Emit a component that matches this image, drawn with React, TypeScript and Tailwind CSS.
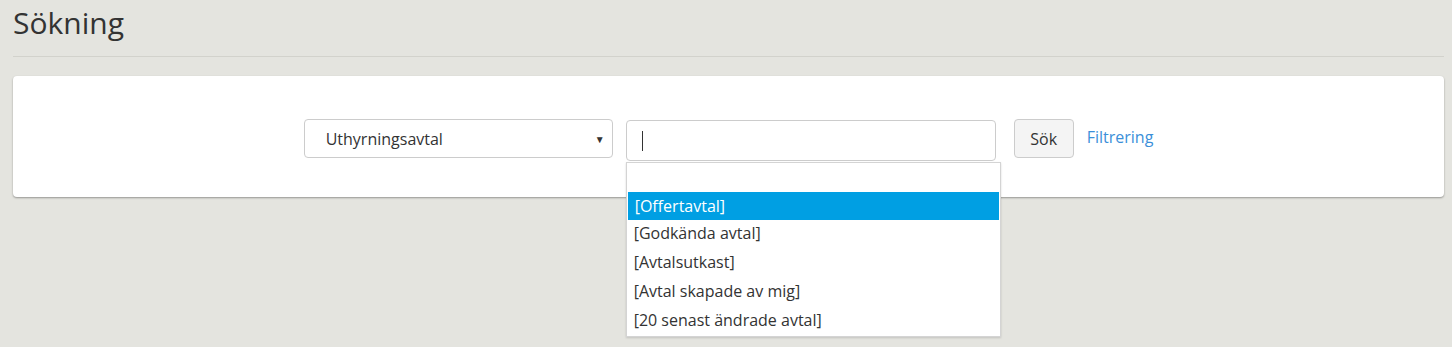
import { useState } from "react";

const options = [
  "[Offertavtal]",
  "[Godkända avtal]",
  "[Avtalsutkast]",
  "[Avtal skapade av mig]",
  "[20 senast ändrade avtal]",
];

export default function App() {
  const [query, setQuery] = useState("");

  return (
    <div className="min-h-[347px] bg-[#e4e4df] pl-[13px] pr-[8px] pt-[3px] font-['Open_Sans','Noto_Sans',sans-serif] text-[#333]">
      <h1 className="text-[30px] leading-[40px] font-normal text-[#333]">Sökning</h1>
      <hr className="mt-[13px] border-t border-[#d2d2cc]" />

      <div className="mt-[19px] h-[121px] rounded-[4px] bg-white shadow-[0_1px_2px_rgba(0,0,0,0.35)] flex justify-center pt-[43px]">
        <div className="flex items-start">
          <div className="relative w-[309px] h-[39px]">
            <select className="appearance-none w-full h-full rounded-[4px] border border-[#ccc] bg-white pl-[21px] text-[16px] text-[#333]">
              <option>Uthyrningsavtal</option>
            </select>
            <span className="pointer-events-none absolute right-[8px] top-[13px] text-[10px] text-[#333]">▼</span>
          </div>

          <div className="relative ml-[13px] mt-px">
            <input
              value={query}
              onChange={(e) => setQuery(e.target.value)}
              className="w-[370px] h-[41px] rounded-[4px] border border-[#ccc] bg-white px-[16px] text-[16px] outline-none"
            />
            <span className="absolute left-[16px] top-[11px] h-[20px] w-px bg-[#333]" />
            <ul className="absolute left-0 top-[42px] w-[375px] border border-[#d4d4d4] bg-white pt-[29px] shadow-[0_1px_2px_rgba(0,0,0,0.15)]">
              {options.map((o, i) => (
                <li
                  key={o}
                  className={
                    i === 0
                      ? "h-[28px] leading-[28px] pl-[7px] mx-px text-[16px] bg-[#009fe3] text-white"
                      : "h-[29px] leading-[27px] pl-[7px] text-[16px] text-[#333]"
                  }
                >
                  {o}
                </li>
              ))}
            </ul>
          </div>

          <button className="ml-[18px] w-[60px] h-[39px] rounded-[4px] border border-[#ccc] bg-[#f4f4f4] text-[16px] text-[#333]">
            Sök
          </button>
          <a href="#" className="ml-[13px] mt-[6px] text-[16px] text-[#3b8fd9]">
            Filtrering
          </a>
        </div>
      </div>
    </div>
  );
}
